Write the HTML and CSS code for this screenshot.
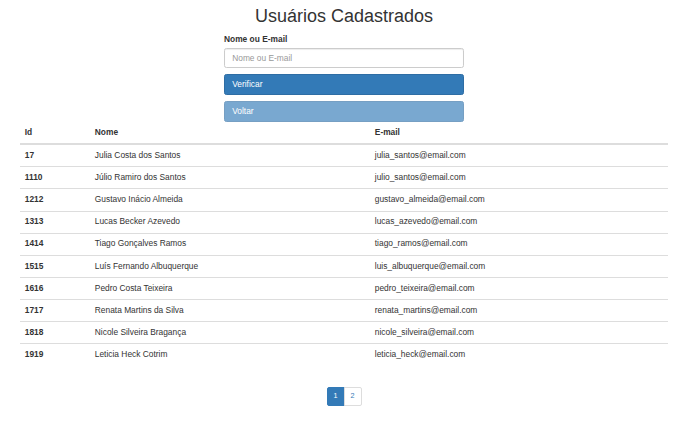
FILE: index.html
```html
<!DOCTYPE html>
<html lang="pt-BR">
<head>
<meta charset="utf-8">
<title>Usuários Cadastrados</title>
<link rel="stylesheet" href="styles.css">
</head>
<body>
<div class="page">
  <h1 class="title">Usuários Cadastrados</h1>
  <form class="search">
    <label class="label" for="q">Nome ou E-mail</label>
    <input class="input" id="q" type="text" placeholder="Nome ou E-mail">
    <button type="button" class="btn">Verificar</button>
    <button type="button" class="btn btn-disabled">Voltar</button>
  </form>
  <table class="table">
    <thead>
      <tr><th class="c-id">Id</th><th class="c-name">Nome</th><th>E-mail</th></tr>
    </thead>
    <tbody>
      <tr><td class="id">17</td><td>Julia Costa dos Santos</td><td>julia_santos@email.com</td></tr>
      <tr><td class="id">1110</td><td>Júlio Ramiro dos Santos</td><td>julio_santos@email.com</td></tr>
      <tr><td class="id">1212</td><td>Gustavo Inácio Almeida</td><td>gustavo_almeida@email.com</td></tr>
      <tr><td class="id">1313</td><td>Lucas Becker Azevedo</td><td>lucas_azevedo@email.com</td></tr>
      <tr><td class="id">1414</td><td>Tiago Gonçalves Ramos</td><td>tiago_ramos@email.com</td></tr>
      <tr><td class="id">1515</td><td>Luís Fernando Albuquerque</td><td>luis_albuquerque@email.com</td></tr>
      <tr><td class="id">1616</td><td>Pedro Costa Teixeira</td><td>pedro_teixeira@email.com</td></tr>
      <tr><td class="id">1717</td><td>Renata Martins da Silva</td><td>renata_martins@email.com</td></tr>
      <tr><td class="id">1818</td><td>Nicole Silveira Bragança</td><td>nicole_silveira@email.com</td></tr>
      <tr><td class="id">1919</td><td>Leticia Heck Cotrim</td><td>leticia_heck@email.com</td></tr>
    </tbody>
  </table>
  <nav class="pager">
    <a class="page-link active" href="#">1</a><a class="page-link" href="#">2</a>
  </nav>
</div>
</body>
</html>
```
FILE: styles.css
```css
* { box-sizing: border-box; }
html, body { margin: 0; padding: 0; background: #fff; }
body {
  font-family: "Liberation Sans", Arial, sans-serif;
  font-size: 8.4px;
  line-height: 1.42857;
  color: #333;
}
.page {
  padding: 0 18px 0 20px;
}
.title {
  margin: 7px 0 0;
  font-size: 18px;
  font-weight: 500;
  line-height: 1.1;
  text-align: center;
  color: #333;
}
.search {
  width: 240px;
  margin: 6px auto 0;
  display: flex;
  flex-direction: column;
}
.label {
  font-weight: bold;
  font-size: 8.4px;
  margin-bottom: 3px;
}
.input {
  height: 20.4px;
  padding: 3.6px 7.2px;
  font-family: inherit;
  font-size: 8.4px;
  color: #555;
  border: 1px solid #ccc;
  border-radius: 2.4px;
  box-shadow: inset 0 1px 1px rgba(0,0,0,.075);
  margin-bottom: 6px;
  outline: none;
}
.input::placeholder { color: #999; }
.btn {
  height: 20.4px;
  padding: 3.6px 7.2px;
  font-family: inherit;
  font-size: 8.4px;
  color: #fff;
  text-align: left;
  background: #337ab7;
  border: 1px solid #2e6da4;
  border-radius: 2.4px;
  margin-bottom: 6.6px;
}
.btn-disabled { opacity: .65; }
.table {
  width: 100%;
  border-collapse: collapse;
  margin-top: -6px;
}
.table th, .table td {
  padding: 4.8px;
  line-height: 11.5px;
  text-align: left;
  vertical-align: top;
  border-top: 1px solid #ddd;
}
.table thead th {
  border-top: 0;
  border-bottom: 2px solid #ddd;
  font-weight: bold;
  vertical-align: bottom;
}
.table tbody tr:first-child td { border-top: 0; }
.c-id { width: 70px; }
.c-name { width: 280px; }
.id { font-weight: bold; }
.pager {
  display: flex;
  justify-content: center;
  margin: 22px 0 12px;
}
.page-link {
  display: block;
  padding: 3px 6px;
  font-size: 7.2px;
  line-height: 1.5;
  color: #337ab7;
  text-decoration: none;
  background: #fff;
  border: 1px solid #ddd;
}
.page-link:first-child { border-radius: 2px 0 0 2px; }
.page-link:last-child { border-radius: 0 2px 2px 0; margin-left: -1px; }
.page-link.active {
  color: #fff;
  background: #337ab7;
  border-color: #337ab7;
}
```
